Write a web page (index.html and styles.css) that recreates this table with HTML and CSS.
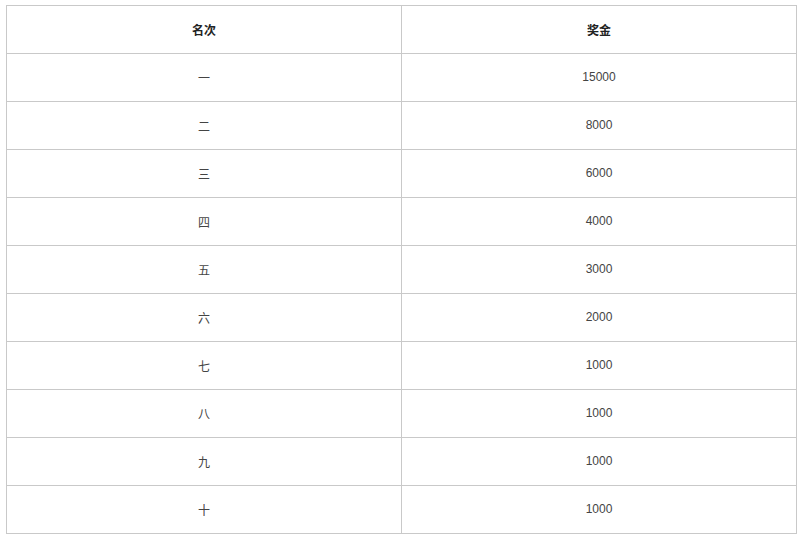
FILE: index.html
```html
<!DOCTYPE html>
<html lang="zh">
<head>
<meta charset="utf-8">
<link rel="stylesheet" href="styles.css">
</head>
<body>
<table class="prize">
  <thead>
    <tr><th>名次</th><th>奖金</th></tr>
  </thead>
  <tbody>
    <tr><td>一</td><td>15000</td></tr>
    <tr><td>二</td><td>8000</td></tr>
    <tr><td>三</td><td>6000</td></tr>
    <tr><td>四</td><td>4000</td></tr>
    <tr><td>五</td><td>3000</td></tr>
    <tr><td>六</td><td>2000</td></tr>
    <tr><td>七</td><td>1000</td></tr>
    <tr><td>八</td><td>1000</td></tr>
    <tr><td>九</td><td>1000</td></tr>
    <tr><td>十</td><td>1000</td></tr>
  </tbody>
</table>
</body>
</html>
```

FILE: styles.css
```css
html, body {
  margin: 0;
  padding: 0;
  background: #fff;
}
body {
  padding: 5px 0 0 6px;
  font-family: "Liberation Sans", Arial, "Noto Sans CJK SC", sans-serif;
  color: #444;
}
.prize {
  width: 791px;
  border-collapse: collapse;
  table-layout: fixed;
  border: 1px solid #c9c9c9;
}
.prize th,
.prize td {
  border: 1px solid #c9c9c9;
  height: 46px;
  padding: 0 0 1px;
  text-align: center;
  vertical-align: middle;
  font-size: 12px;
}
.prize th {
  font-weight: bold;
  color: #222;
}
```
